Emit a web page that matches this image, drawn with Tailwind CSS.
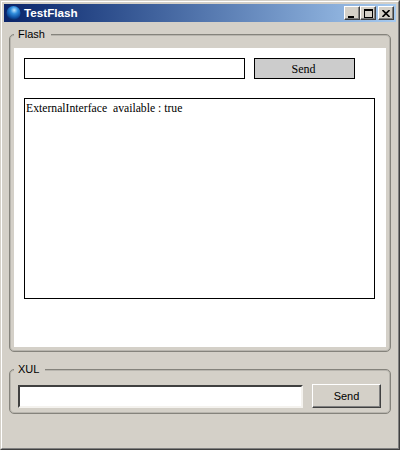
<!DOCTYPE html>
<html lang="en">
<head>
    <meta charset="UTF-8">
    <title>TestFlash</title>
    <script src="https://cdn.jsdelivr.net/npm/@tailwindcss/browser@4"></script>
</head>
<body class="m-0 w-[400px] h-[450px] overflow-hidden bg-[#d4d0c8] font-['Liberation_Sans',sans-serif]">
    <!-- Window frame -->
    <div class="w-[400px] h-[450px] flex flex-col border border-t-[#d4d0c8] border-l-[#d4d0c8] border-r-[#404040] border-b-[#404040]">
        <div class="flex-1 flex flex-col border border-t-white border-l-white border-r-[#808080] border-b-[#808080] p-[2px] min-h-0">
            <!-- Title bar -->
            <div class="h-[18px] shrink-0 flex items-center bg-gradient-to-r from-[#0a246a] to-[#a6caf0] pl-[2px] pr-[2px]">
                <svg width="16" height="16" viewBox="0 0 16 16" class="shrink-0">
                    <defs>
                        <radialGradient id="globe" cx="0.55" cy="0.3" r="0.75">
                            <stop offset="0" stop-color="#bfe6ff"/>
                            <stop offset="0.35" stop-color="#2f8ddc"/>
                            <stop offset="0.75" stop-color="#0c4a9c"/>
                            <stop offset="1" stop-color="#06214f"/>
                        </radialGradient>
                    </defs>
                    <circle cx="7.5" cy="8" r="7" fill="url(#globe)"/>
                </svg>
                <span class="ml-[2px] text-[11.7px] leading-none font-bold text-white">TestFlash</span>
                <div class="ml-auto flex items-center">
                    <button class="w-[16px] h-[14px] bg-[#d4d0c8] border border-t-white border-l-white border-r-[#404040] border-b-[#404040] shadow-[inset_-1px_-1px_0_#808080] flex items-end justify-start pl-[3px] pb-[1px]">
                        <span class="block w-[6px] h-[2px] bg-black"></span>
                    </button>
                    <button class="w-[16px] h-[14px] bg-[#d4d0c8] border border-t-white border-l-white border-r-[#404040] border-b-[#404040] shadow-[inset_-1px_-1px_0_#808080] flex items-center justify-center">
                        <span class="block w-[9px] h-[9px] border border-t-2 border-black"></span>
                    </button>
                    <button class="ml-[2px] w-[16px] h-[14px] bg-[#d4d0c8] border border-t-white border-l-white border-r-[#404040] border-b-[#404040] shadow-[inset_-1px_-1px_0_#808080] flex items-center justify-center">
                        <svg width="8" height="7" viewBox="0 0 8 7"><path d="M0.5 0 L7.5 7 M7.5 0 L0.5 7" stroke="#000" stroke-width="1.6"/></svg>
                    </button>
                </div>
            </div>

            <div class="flex-1 flex flex-col px-[5px] pt-[4px] min-h-0">
                <!-- Flash group -->
                <fieldset class="h-[326px] shrink-0 border border-[#85837c] rounded-[5px] shadow-[inset_0_0_0_1px_#b8b5ae] px-[4px] pb-[3px] pt-0 min-w-0">
                    <legend class="ml-0 pl-[4px] pr-[6px] bg-[#d4d0c8] text-[11px] leading-[16px] text-black">Flash</legend>
                    <div class="h-[299px] bg-white pt-[10px] pl-[10px] pr-[11px] mt-[6px]">
                        <div class="flex gap-[9px] font-['Liberation_Serif',serif]">
                            <input type="text" class="w-[221px] h-[21px] bg-white border border-black outline-none">
                            <button class="w-[101px] h-[21px] bg-[#cccccc] border border-black pr-[2px] text-[12px] leading-none text-black">Send</button>
                        </div>
                        <div class="mt-[19px] h-[201px] border border-black px-[1px] py-[3px] text-[11.7px] leading-[14px] text-black whitespace-pre font-['Liberation_Serif',serif]">ExternalInterface  available : true</div>
                    </div>
                </fieldset>

                <!-- XUL group -->
                <fieldset class="mt-[9px] h-[53px] shrink-0 border border-[#85837c] rounded-[5px] shadow-[inset_0_0_0_1px_#b8b5ae] pl-[8px] pr-[9px] pt-0 min-w-0">
                    <legend class="-ml-[4px] pl-[4px] pr-[6px] bg-[#d4d0c8] text-[11px] leading-[16px] text-black">XUL</legend>
                    <div class="flex items-start gap-[9px] mt-[7px]">
                        <input type="text" class="mt-[1px] w-[285px] h-[23px] bg-white border-2 border-t-[#404040] border-l-[#404040] border-r-[#f4f2ee] border-b-[#f4f2ee] outline-none">
                        <button class="w-[69px] h-[24px] bg-[#d4d0c8] border border-t-white border-l-white border-r-[#404040] border-b-[#404040] shadow-[inset_-1px_-1px_0_#808080] text-[11px] leading-none text-black">Send</button>
                    </div>
                </fieldset>
            </div>
        </div>
    </div>
</body>
</html>
